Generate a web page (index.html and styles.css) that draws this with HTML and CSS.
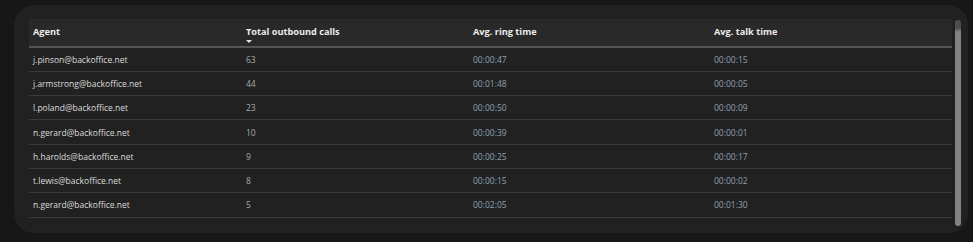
FILE: index.html
```html
<!DOCTYPE html>
<html>
<head>
<meta charset="utf-8">
<link rel="stylesheet" href="styles.css">
</head>
<body>
<div class="card">
  <div class="viewport">
    <table class="grid">
      <colgroup>
        <col class="c1"><col class="c2"><col class="c3"><col class="c4">
      </colgroup>
      <thead>
        <tr>
          <th>Agent</th>
          <th><span class="sortable">Total outbound calls<span class="arrow"></span></span></th>
          <th>Avg. ring time</th>
          <th>Avg. talk time</th>
        </tr>
      </thead>
      <tbody>
        <tr><td class="agent">j.pinson@backoffice.net</td><td class="num">63</td><td class="time">00:00:47</td><td class="time">00:00:15</td></tr>
        <tr><td class="agent">j.armstrong@backoffice.net</td><td class="num">44</td><td class="time">00:01:48</td><td class="time">00:00:05</td></tr>
        <tr><td class="agent">l.poland@backoffice.net</td><td class="num">23</td><td class="time">00:00:50</td><td class="time">00:00:09</td></tr>
        <tr><td class="agent">n.gerard@backoffice.net</td><td class="num">10</td><td class="time">00:00:39</td><td class="time">00:00:01</td></tr>
        <tr><td class="agent">h.harolds@backoffice.net</td><td class="num">9</td><td class="time">00:00:25</td><td class="time">00:00:17</td></tr>
        <tr><td class="agent">t.lewis@backoffice.net</td><td class="num">8</td><td class="time">00:00:15</td><td class="time">00:00:02</td></tr>
        <tr><td class="agent">n.gerard@backoffice.net</td><td class="num">5</td><td class="time">00:02:05</td><td class="time">00:01:30</td></tr>
        <tr><td class="agent">m.davis@backoffice.net</td><td class="num">4</td><td class="time">00:00:21</td><td class="time">00:00:11</td></tr>
      </tbody>
    </table>
  </div>
  <div class="scrollbar"><div class="thumb"></div></div>
</div>
</body>
</html>
```
FILE: styles.css
```css
html, body {
  margin: 0;
  padding: 0;
  background: #171717;
}
body {
  padding: 5px 5px 9px 14px;
  font-family: "Open Sans", "Liberation Sans", sans-serif;
}
.card {
  box-sizing: border-box;
  width: 954px;
  height: 228px;
  background: #212121;
  border-radius: 20px;
  padding: 14px 7px 7px 15px;
  display: flex;
  gap: 3px;
}
.viewport {
  flex: 1;
  overflow: hidden;
}
.grid {
  width: 923px;
  border-collapse: collapse;
  table-layout: fixed;
}
.c1 { width: 213px; }
.c2 { width: 227px; }
.c3 { width: 241px; }
.c4 { width: 242px; }
thead tr {
  background: #292929;
}
th {
  height: 27.5px;
  padding: 0 4px;
  text-align: left;
  vertical-align: top;
  padding-top: 6px;
  box-sizing: border-box;
  font-size: 9.2px;
  font-weight: 700;
  color: #ececec;
  border-bottom: 2px solid #555;
}
.sortable {
  position: relative;
  display: inline-block;
}
.arrow {
  position: absolute;
  left: 0;
  top: 15px;
  width: 0;
  height: 0;
  border-left: 3px solid transparent;
  border-right: 3px solid transparent;
  border-top: 3px solid #e6e6e6;
}
td {
  height: 23.3px;
  padding: 0 4px;
  font-size: 8.5px;
  border-bottom: 1px solid #3a3a3a;
  white-space: nowrap;
}
.agent { color: #dcdcdc; }
.num { color: #a9a9a9; }
.time { color: #8fa2b6; }
.scrollbar {
  width: 6px;
  margin-top: 1px;
  display: flex;
}
.thumb {
  flex: 1;
  border-radius: 3px;
  background: linear-gradient(#4e4e4e 0, #4e4e4e 8px, #828282 12px, #828282 100%);
}
```
